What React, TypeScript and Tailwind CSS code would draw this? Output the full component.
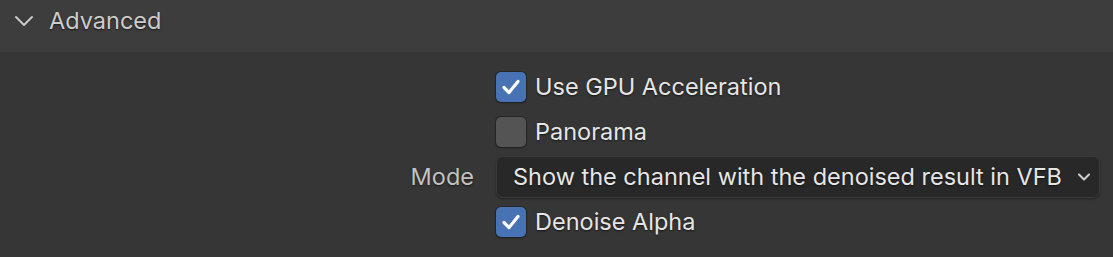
import React from "react";

function Check({ checked, label }: { checked: boolean; label: string }) {
  return (
    <div className="flex items-center h-[45px]">
      <div
        className={
          "w-[30px] h-[30px] rounded-[5px] flex items-center justify-center shadow-[0_0_0_1px_rgba(30,30,30,0.6),0_1px_2px_rgba(0,0,0,0.4)] " +
          (checked ? "bg-[#4772b3]" : "bg-[#545454]")
        }
      >
        {checked && (
          <svg width="22" height="22" viewBox="0 0 22 22">
            <polyline
              points="4,11.5 9,16.5 18,5.5"
              fill="none"
              stroke="#ffffff"
              strokeWidth="3.2"
              strokeLinecap="round"
              strokeLinejoin="round"
            />
          </svg>
        )}
      </div>
      <span className="ml-[9px] text-[23.5px] text-[#e6e6e6] [text-shadow:0_1px_2px_rgba(0,0,0,0.6)]">
        {label}
      </span>
    </div>
  );
}

export default function App() {
  return (
    <div
      className="w-[1113px] h-[257px] bg-[#363636] overflow-hidden"
      style={{ fontFamily: "Inter, 'Noto Sans', sans-serif" }}
    >
      <div className="h-[52px] bg-[#3d3d3d] flex items-center pb-[10px]">
        <svg width="20" height="14" viewBox="0 0 20 14" className="ml-[14px]">
          <polyline
            points="2,3 10,11 18,3"
            fill="none"
            stroke="#c8c8c8"
            strokeWidth="2"
            strokeLinecap="round"
            strokeLinejoin="round"
          />
        </svg>
        <span className="ml-[15px] text-[23.5px] text-[#cccccc] [text-shadow:0_1px_2px_rgba(0,0,0,0.6)]">
          Advanced
        </span>
      </div>
      <div className="pt-[12px] grid grid-cols-[474px_1fr] gap-x-[22px] pr-[13px]">
        <div />
        <Check checked label="Use GPU Acceleration" />
        <div />
        <Check checked={false} label="Panorama" />
        <div className="h-[45px] flex items-center justify-end text-[23.5px] text-[#c2c2c2] [text-shadow:0_1px_2px_rgba(0,0,0,0.6)]">
          Mode
        </div>
        <div className="h-[45px] flex items-center">
          <div className="w-full h-[42px] rounded-[7px] bg-[#282828] border border-[#3a3a3a] flex items-center pl-[16px] pr-[8px] shadow-[0_1px_2px_rgba(0,0,0,0.4)]">
            <span className="flex-1 text-[23.5px] text-[#e6e6e6] [text-shadow:0_1px_2px_rgba(0,0,0,0.6)] whitespace-nowrap">
              Show the channel with the denoised result in VFB
            </span>
            <svg width="14" height="10" viewBox="0 0 14 10">
              <polyline
                points="2,2.5 7,7.5 12,2.5"
                fill="none"
                stroke="#d0d0d0"
                strokeWidth="2"
                strokeLinecap="round"
                strokeLinejoin="round"
              />
            </svg>
          </div>
        </div>
        <div />
        <Check checked label="Denoise Alpha" />
      </div>
    </div>
  );
}
